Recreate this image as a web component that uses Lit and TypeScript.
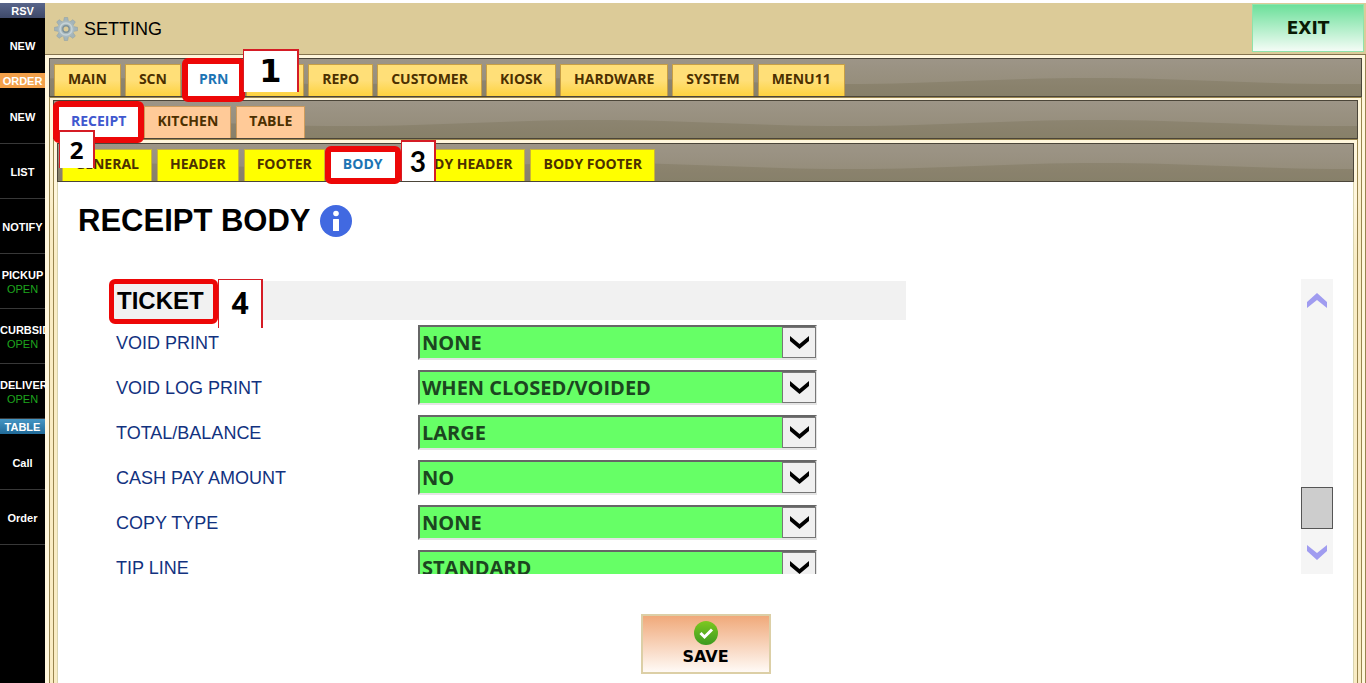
import { LitElement, html, css, svg } from "lit";
import { customElement } from "lit/decorators.js";

interface Tab { label: string; active?: boolean; marked?: boolean; step?: string; }

const MAIN_TABS: Tab[] = [
  { label: "MAIN" }, { label: "SCN" }, { label: "PRN", active: true, marked: true, step: "1" },
  { label: "EMP" }, { label: "REPO" }, { label: "CUSTOMER" }, { label: "KIOSK" },
  { label: "HARDWARE" }, { label: "SYSTEM" }, { label: "MENU11" },
];
const PRINT_TABS: Tab[] = [
  { label: "RECEIPT", active: true, marked: true, step: "2" }, { label: "KITCHEN" }, { label: "TABLE" },
];
const RECEIPT_TABS: Tab[] = [
  { label: "GENERAL" }, { label: "HEADER" }, { label: "FOOTER" },
  { label: "BODY", active: true, marked: true, step: "3" }, { label: "BODY HEADER" }, { label: "BODY FOOTER" },
];
const FIELDS = [
  ["VOID PRINT", "NONE"], ["VOID LOG PRINT", "WHEN CLOSED/VOIDED"], ["TOTAL/BALANCE", "LARGE"],
  ["CASH PAY AMOUNT", "NO"], ["COPY TYPE", "NONE"], ["TIP LINE", "STANDARD"],
];
const SIDE = [
  { title: "RSV", tone: "slate", items: [["NEW"]] },
  { title: "ORDER", tone: "orange", items: [["NEW"], ["LIST"], ["NOTIFY"], ["PICKUP", "OPEN"], ["CURBSIDE", "OPEN"], ["DELIVERY", "OPEN"]] },
  { title: "TABLE", tone: "blue", items: [["Call"], ["Order"]] },
];

@customElement("side-menu")
export class SideMenu extends LitElement {
  static styles = css`
    :host { display: block; width: 45px; background: #000; font: bold 11px/14px "Liberation Sans", Arial, sans-serif; color: #fff; overflow: hidden; }
    .title { height: 15px; line-height: 16px; text-align: center; }
    .slate { background: linear-gradient(#58658a, #3e4969); }
    .orange { margin-bottom: 1px; background: #f2a04a; }
    .blue { margin-bottom: 1px; background: linear-gradient(#4596c4, #216a98); }
    .item { display: flex; flex-direction: column; align-items: safe center; justify-content: center; width: 100%; height: 55px; padding: 2px 0 0; border: 0; border-bottom: 1px solid #383838; background: none; font: inherit; color: inherit; white-space: nowrap; }
    .slate + .item { border-bottom-color: #000; }
    .state { color: #1ea51e; font-weight: normal; }
  `;
  render() {
    return html`<nav>${SIDE.map((g) => html`<div class="title ${g.tone}">${g.title}</div>
      ${g.items.map(([name, state]) => html`<button class="item"><span>${name}</span>${state ? html`<span class="state">${state}</span>` : ""}</button>`)}`)}</nav>`;
  }
}

@customElement("tab-bar")
export class TabBar extends LitElement {
  static properties = { tabs: { attribute: false }, tone: { type: String } };
  declare tabs: Tab[];
  declare tone: string;
  static styles = css`
    :host { display: block; }
    .bar {
      display: flex; gap: 5px; height: 32px; padding: 5px 4px 0; border: 1px solid #4b4539;
      background: url("data:image/svg+xml,%3Csvg xmlns='http://www.w3.org/2000/svg' width='500' height='38'%3E%3Cpath d='M0 19C100 19 150 25 250 25S400 19 500 19V38H0Z' fill='%23554c2c' fill-opacity='.17'/%3E%3C/svg%3E") 42px 0 repeat-x, linear-gradient(#9d9587, #928a76);
    }
    .gold { gap: 4px; }
    .slot { position: relative; display: flex; }
    .tab { height: 32px; padding: 0 12px 4px; border: 1px solid #c79f45; border-bottom: 0; font: bold 14px/27px "Open Sans", "Segoe UI", sans-serif; color: #4c3000; white-space: nowrap; }
    .gold .tab { padding: 0 13px 4px; background: linear-gradient(#ffdf78 50%, #fdd23f); }
    .peach .tab { background: #ffca98; border-color: #cf9c5c; }
    .yellow .tab { background: #ffff00; border-color: #c9b43a; }
    .bar .tab.active { background: #fff; color: #1c74b4; border-color: #fff; }
    .peach .tab.active { color: #4058cf; }
    .marker { position: absolute; border: 6px solid #ed0707; border-radius: 6px; z-index: 1; pointer-events: none; }
    .gold .marker { inset: -6px -3px; }
    .peach .marker { inset: -5px; }
    .yellow .marker { inset: -3px -5px; }
    .step { position: absolute; z-index: 2; background: #fff; border: solid #d51c25; border-width: 2px 2px 0 1px; box-sizing: border-box; text-align: center; color: #000; pointer-events: none; }
    .gold .step { left: 58px; top: -15px; width: 56px; height: 43px; font: bold 32px/40px "DejaVu Sans", sans-serif; }
    .peach .step { left: 1px; top: 24px; width: 36px; height: 38px; font: bold 24px/35px "Noto Sans", sans-serif; }
    .yellow .step { left: 71px; top: -9px; width: 35px; height: 41px; font: bold 28px/38px Lato, sans-serif; }
  `;
  render() {
    return html`<div class="bar ${this.tone}" role="tablist">${this.tabs.map((t) => html`<div class="slot">
      <button class="tab ${t.active ? "active" : ""}" role="tab" aria-selected=${t.active ? "true" : "false"}>${t.label}</button>
      ${t.marked ? html`<span class="marker"></span>` : ""}${t.step ? html`<span class="step">${t.step}</span>` : ""}</div>`)}</div>`;
  }
}

const gear = svg`<g fill="#a3b4ba" stroke="#8b9da3" stroke-width=".5">${[0, 45, 90, 135].map((a) => svg`<path d="M9.500 5L10.300.5h3.400L14.500 5v14l-.8 4.500h-3.400L9.500 19z" transform="rotate(${a} 12 12)"/>`)}</g>
  <circle cx="12" cy="12" r="8.400" fill="#a9b9be"/><circle cx="12" cy="12" r="6" fill="none" stroke="#c6d3d8" stroke-width="1.600"/><circle cx="12" cy="12" r="3.200" fill="#dccb98" stroke="#7d929b" stroke-width="1.400"/>`;

@customElement("app-root")
export class AppRoot extends LitElement {
  static styles = css`
    :host { display: block; height: 100vh; overflow: hidden; background: #fff; font-family: "Liberation Sans", Arial, sans-serif; color: #000; }
    .page { box-sizing: border-box; display: grid; grid-template-columns: 45px minmax(0, 1fr); height: 100%; padding-top: 3px; }
    .main { display: flex; flex-direction: column; min-width: 0; min-height: 0; }
    .head { display: flex; align-items: center; justify-content: space-between; height: 51px; padding: 0 2px 0 9px; background: #dccb98; border-bottom: 1px solid #85744e; }
    .name { display: flex; align-items: center; gap: 6px; margin: 0; font-size: 18px; line-height: 24px; font-weight: normal; }
    .exit { align-self: flex-start; width: 112px; height: 48px; margin-top: 1px; padding: 0; border: 1px solid #8fe3ab; background: linear-gradient(#6ce09a, #f4fcf6); font: bold 17px/24px "DejaVu Sans", Tahoma, sans-serif; color: #0a1a04; }
    .frame { display: flex; flex-direction: column; flex: 1; min-height: 0; background: #fff6dc; padding: 3px 3px 0; border: solid #98854f; border-width: 0 1px; }
    .outer { border-width: 0 1px 0 0; padding-left: 4px; }
    .frame .frame { border-top-width: 1px; padding-top: 2px; background: linear-gradient(#fff6dc 60px, #f9ecc4 120px); }
    .frame .frame .frame { padding-top: 3px; }
    .content { display: flex; flex-direction: column; flex: 1; min-height: 0; background: #fff; border: 1px solid #d8d4b0; border-width: 0 1px; padding: 17px 20px 0; }
    .title { display: flex; align-items: center; gap: 9px; margin: 0; height: 44px; font-size: 31px; line-height: 44px; }
    .scroll { display: flex; justify-content: space-between; height: 295px; margin-top: 36px; padding-left: 31px; overflow: hidden; }
    .form { flex: 0 1 797px; }
    .section { position: relative; display: flex; align-items: center; height: 39px; margin: 2px 0 5px; padding-left: 8px; background: #f1f1f1; font-size: 24px; }
    .marker { position: absolute; left: 0; top: -2px; width: 99px; height: 35px; border: 5px solid #ed0707; border-radius: 6px; }
    .step { position: absolute; left: 109px; top: -2px; width: 42px; height: 48px; background: #fff; border: solid #d51c25; border-width: 1px 2px 0 1px; font: bold 30px/46px "Noto Sans", sans-serif; text-align: center; }
    .row { display: grid; grid-template-columns: 302px minmax(0, 399px); align-items: center; height: 35px; margin: 0 0 10px 7px; color: #12327f; font-size: 18px; }
    label { padding-top: 1px; }
    .pick { position: relative; display: block; height: 35px; }
    select { appearance: none; box-sizing: border-box; width: 100%; height: 35px; padding: 0 36px 0 2px; border: 2px solid; border-color: #666 #e4e4e4 #e4e4e4 #666; border-radius: 0; background: #66ff66; color: #1c4620; font: bold 20px/30px "Open Sans", sans-serif; }
    .arrow { position: absolute; right: 1px; top: 2px; box-sizing: border-box; width: 34px; height: 31px; background: #f0f0f0; border: 1px solid #777; pointer-events: none; }
    .track { display: flex; flex-direction: column; align-items: center; width: 32px; background: #f5f5f5; }
    .track button { display: block; width: 32px; height: 42px; padding: 0; border: 0; background: none; }
    .thumb { box-sizing: border-box; width: 32px; height: 42px; margin: auto 0 3px; border: 1px solid #555; background: #cdcdcd; }
    .actions { display: flex; justify-content: center; margin-top: 40px; }
    .save { display: flex; flex-direction: column; align-items: center; width: 130px; height: 60px; padding: 5px 0 0; border: 2px solid #dccfa6; background: linear-gradient(#f0a97a, #fffaf6); font: bold 16px/24px "DejaVu Sans", Tahoma, sans-serif; color: #000; }
    svg { display: block; flex: none; }
  `;
  render() {
    return html`<div class="page">
      <side-menu></side-menu>
      <div class="main">
        <header class="head">
          <h1 class="name"><svg width="24" height="24" viewBox="0 0 24 24">${gear}</svg>SETTING</h1>
          <button class="exit">EXIT</button>
        </header>
        <div class="frame outer">
          <tab-bar tone="gold" .tabs=${MAIN_TABS}></tab-bar>
          <div class="frame">
            <tab-bar tone="peach" .tabs=${PRINT_TABS}></tab-bar>
            <div class="frame">
              <tab-bar tone="yellow" .tabs=${RECEIPT_TABS}></tab-bar>
              <main class="content">
                <h2 class="title">RECEIPT BODY
                  <svg width="32" height="32" viewBox="0 0 32 32"><circle cx="16" cy="16" r="16" fill="#4169e1"/><circle cx="16" cy="8.500" r="2.800" fill="#fff"/><rect x="13" y="14" width="6" height="12" rx=".5" fill="#fff"/></svg>
                </h2>
                <div class="scroll">
                  <div class="form">
                    <h3 class="section">TICKET<span class="marker"></span><span class="step">4</span></h3>
                    ${FIELDS.map(([label, value], i) => html`<div class="row"><label for="f${i}">${label}</label>
                      <span class="pick"><select id="f${i}"><option>${value}</option></select>
                      <span class="arrow"><svg width="32" height="29" viewBox="0 0 32 29"><path d="M7 8v5L16.500 21l9.500-8V8L16.500 16z" fill="#000"/></svg></span></span></div>`)}
                  </div>
                  <div class="track">
                    <button aria-label="Scroll up"><svg width="32" height="42" viewBox="0 0 32 42"><path d="M6 29v-6L16 14l10 9v6l-10-8z" fill="#a09cf0"/></svg></button>
                    <div class="thumb"></div>
                    <button aria-label="Scroll down"><svg width="32" height="42" viewBox="0 0 32 42"><path d="M6 13v6L16 28l10-9V13l-10 8z" fill="#a09cf0"/></svg></button>
                  </div>
                </div>
                <div class="actions"><button class="save"><svg width="24" height="24" viewBox="0 0 24 24"><defs><linearGradient id="g" x2="0" y2="1"><stop stop-color="#7ec820"/><stop offset="1" stop-color="#3c9a20"/></linearGradient></defs><circle cx="12" cy="12" r="12" fill="url(#g)"/><path d="M6.500 12l4 4 7.500-7.500" fill="none" stroke="#fff" stroke-width="3"/></svg>SAVE</button></div>
              </main>
            </div>
          </div>
        </div>
      </div>
    </div>`;
  }
}
